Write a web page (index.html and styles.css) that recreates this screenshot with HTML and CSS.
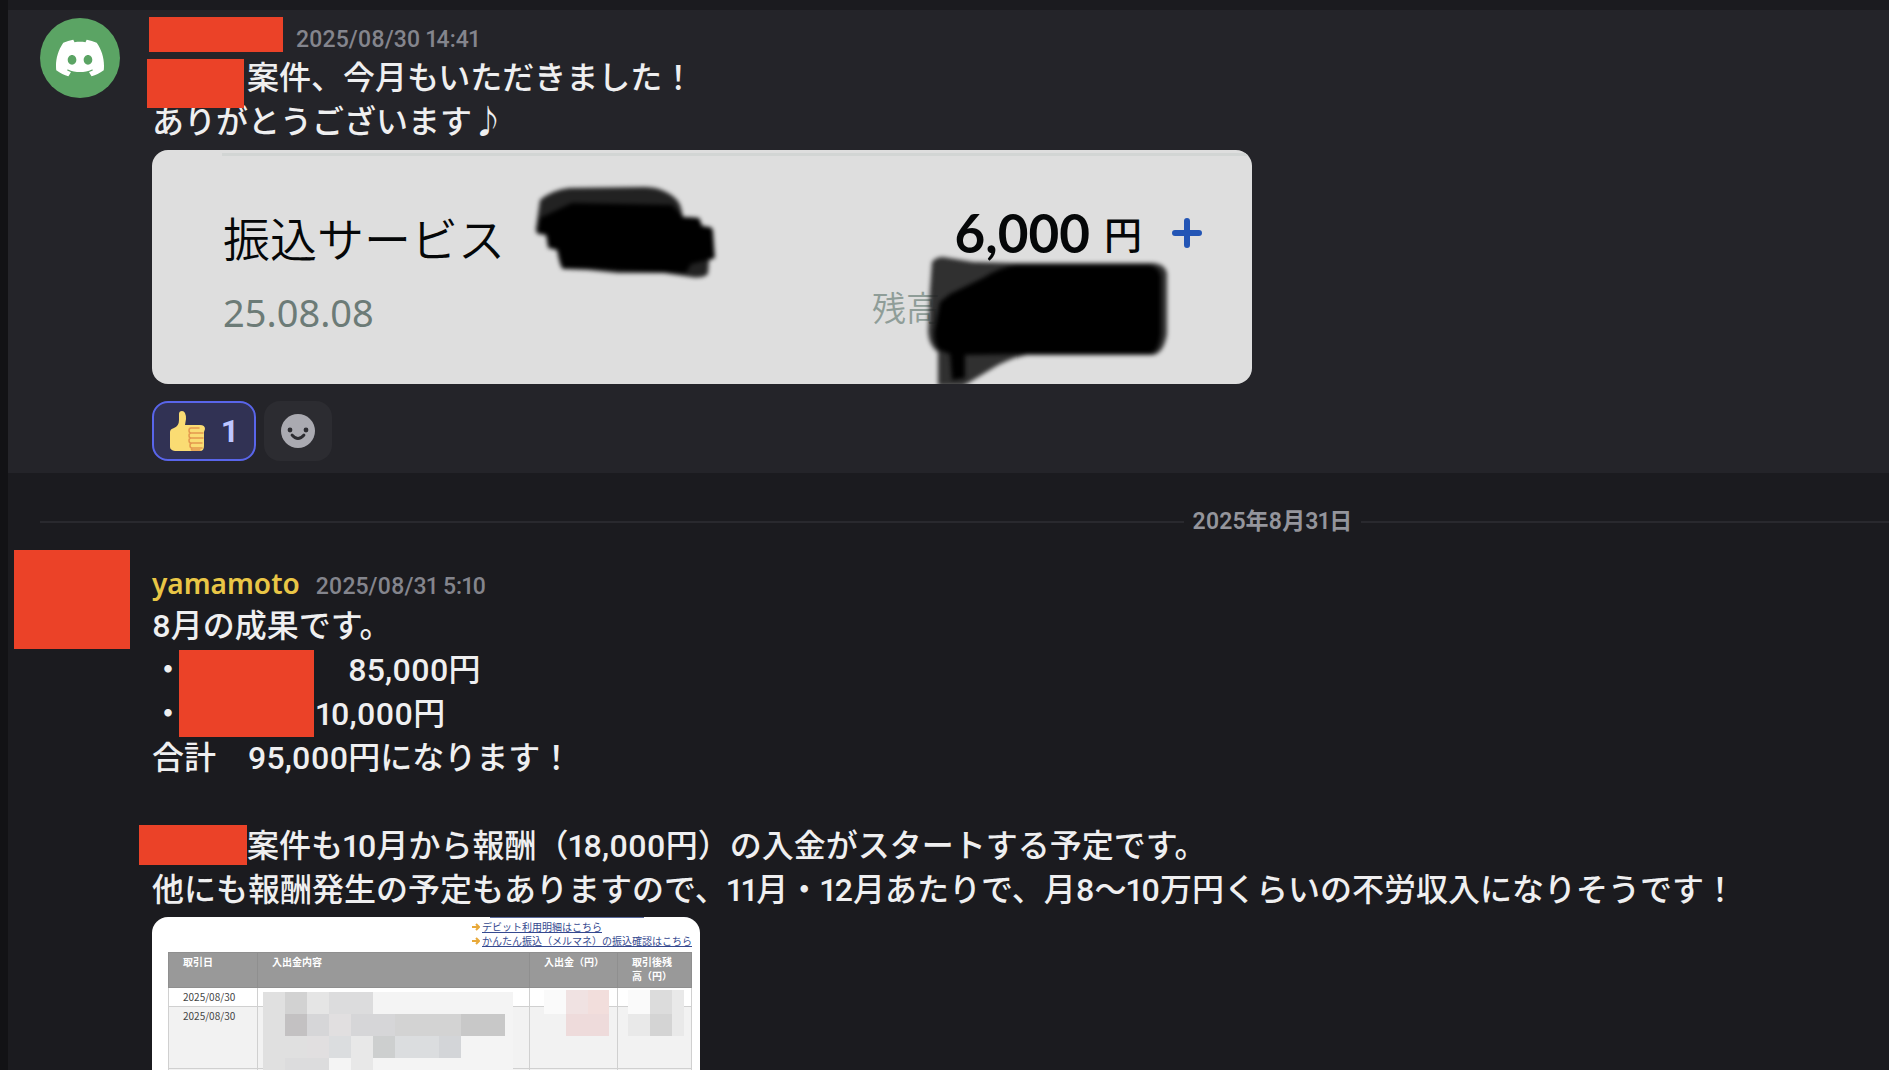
FILE: index.html
```
<!DOCTYPE html>
<html lang="ja">
<head>
  <meta charset="UTF-8">
  <meta name="viewport" content="width=device-width, initial-scale=1.0">
  <title>Discord</title>
  <link rel="stylesheet" href="styles.css">
</head>
<body>
<main class="chat">

  <article class="message highlighted">
    <div class="avatar">
      <svg viewBox="0 0 24 24" width="48" height="48" fill="#fff" aria-hidden="true">
        <path d="M20.317 4.3698a19.7913 19.7913 0 00-4.8851-1.5152.0741.0741 0 00-.0785.0371c-.211.3753-.4447.8648-.6083 1.2495-1.8447-.2762-3.68-.2762-5.4868 0-.1636-.3933-.4058-.8742-.6177-1.2495a.077.077 0 00-.0785-.037 19.7363 19.7363 0 00-4.8852 1.515.0699.0699 0 00-.0321.0277C.5334 9.0458-.319 13.5799.0992 18.0578a.0824.0824 0 00.0312.0561c2.0528 1.5076 4.0413 2.4228 5.9929 3.0294a.0777.0777 0 00.0842-.0276c.4616-.6304.8731-1.2952 1.226-1.9942a.076.076 0 00-.0416-.1057c-.6528-.2476-1.2743-.5495-1.8722-.8923a.077.077 0 01-.0076-.1277c.1258-.0943.2517-.1923.3718-.2914a.0743.0743 0 01.0776-.0105c3.9278 1.7933 8.18 1.7933 12.0614 0a.0739.0739 0 01.0785.0095c.1202.099.246.1981.3728.2924a.077.077 0 01-.0066.1276 12.2986 12.2986 0 01-1.873.8914.0766.0766 0 00-.0407.1067c.3604.698.7719 1.3628 1.225 1.9932a.076.076 0 00.0842.0286c1.961-.6067 3.9495-1.5219 6.0023-3.0294a.077.077 0 00.0313-.0552c.5004-5.177-.8382-9.6739-3.5485-13.6604a.061.061 0 00-.0312-.0286zM8.02 15.3312c-1.1825 0-2.1569-1.0857-2.1569-2.419 0-1.3332.9555-2.4189 2.157-2.4189 1.2108 0 2.1757 1.0952 2.1568 2.419 0 1.3332-.9555 2.4189-2.1569 2.4189zm7.9748 0c-1.1825 0-2.1569-1.0857-2.1569-2.419 0-1.3332.9554-2.4189 2.1569-2.4189 1.2108 0 2.1757 1.0952 2.1568 2.419 0 1.3332-.946 2.4189-2.1568 2.4189Z"/>
      </svg>
    </div>
    <div class="content">
      <header class="meta">
        <span class="name-slot"><span class="redact redact-name"></span></span>
        <time>2025/08/30 14:41</time>
      </header>
      <p><span class="word-slot"><span class="redact redact-word"></span></span>案件、今月もいただきました！</p>
      <p>ありがとうございます♪</p>

      <div class="transfer">
        <div class="transfer-left">
          <div class="service">振込サービス</div>
          <div class="date">25.08.08</div>
        </div>
        <div class="transfer-right">
          <div class="amount">6,000<span class="yen">円</span>
            <svg class="plus" viewBox="0 0 30 30" width="30" height="30" aria-hidden="true"><path d="M15 3v24M3 15h24" stroke="#2355b5" stroke-width="6" stroke-linecap="round"/></svg>
          </div>
          <div class="balance">残高</div>
        </div>
        <svg class="scribble scribble-name" viewBox="0 0 184 96" width="184" height="96" aria-hidden="true">
          <path fill="#222" d="M6 16Q18 6 35 4L111 3Q124 3 134 9 145 15 147 24L149 33 165 34 168 42 176 43 179 46 181 74 175 76 174 90Q168 95 157 93L130 89H84L54 86 29 85Q26 84 23 66L14 64 12 51 4 50Q1 48 2 44Z"/>
          <path fill="#000" d="M6 34L38 19 138 21 149 33 165 34 168 42 178 44 180 74 173 76 157 80 152 89 130 88 84 86 54 84 29 84 24 66 15 63 13 51 4 48Z"/>
        </svg>
        <svg class="scribble scribble-balance" viewBox="0 0 246 132" width="246" height="132" aria-hidden="true">
          <path fill="#222" fill-opacity=".93" d="M6 8Q10 3 17 3L47 8 87 9H227Q239 10 241 19V80Q238 99 227 101H101Q84 104 67 114L37 132H12V98Q3 92 2 78L4 36Z"/>
          <path fill="#000" d="M14 48L24 40 57 24Q74 13 90 11H224Q234 14 235 22V80Q233 98 224 100H98L39 101V124L26 126 24 100 13 96Q8 90 8 78Z"/>
        </svg>
      </div>

      <div class="reactions">
        <button class="reaction reacted" type="button" aria-label="いいね 1">
          <svg viewBox="0 0 36 40" width="36" height="40" aria-hidden="true">
            <path fill="#fadc73" d="M10 3q0-3 3-3 4 0 4 8l-1 6h15q5 0 5 4l-1 3v14q0 5-4 5H6q-5-1-5-4V21q0-3 4-4 5-2 5-8z"/>
            <path fill="none" stroke="#e4984f" stroke-width="1.5" stroke-linecap="round" d="M30 17h-8q-2 0-2 2.500 0 2.500 2 2.500h12M22 22q-2 0-2 2.500t2 2.500h12M22 27q-2 0-2 2.500t2 2.500h11M23 32q-2 0-2 2.500t2 2.500h10M23 37q-1 2 0 2h8"/>
          </svg>
          <span>1</span>
        </button>
        <button class="reaction" type="button" aria-label="リアクションを付ける">
          <svg viewBox="0 0 34 34" width="34" height="34" aria-hidden="true">
            <circle cx="17" cy="17" r="17" fill="#aaaab1"/>
            <circle cx="9" cy="16" r="2.4" fill="#2c2c31"/>
            <circle cx="25" cy="16" r="2.4" fill="#2c2c31"/>
            <path d="M11 21q6 7 12 0" fill="none" stroke="#2c2c31" stroke-width="2.8" stroke-linecap="round"/>
          </svg>
        </button>
      </div>
    </div>
  </article>

  <div class="day-divider"><span>2025年8月31日</span></div>

  <article class="message">
    <div class="avatar-slot"><span class="redact redact-avatar"></span></div>
    <div class="content">
      <header class="meta">
        <a class="username" href="#">yamamoto</a>
        <time>2025/08/31 5:10</time>
      </header>
      <p>8月の成果です。</p>
      <p>・<span class="item-slot"><span class="redact redact-item"></span></span>　85,000円</p>
      <p>・<span class="item-slot"></span>10,000円</p>
      <p>合計　95,000円になります！</p>
      <p class="blank"></p>
      <p><span class="word-slot"><span class="redact redact-project"></span></span>案件も10月から報酬（18,000円）の入金がスタートする予定です。</p>
      <p>他にも報酬発生の予定もありますので、11月・12月あたりで、月8〜10万円くらいの不労収入になりそうです！</p>

      <div class="statement">
        <div class="link-edge"></div>
        <ul class="links">
          <li><svg viewBox="0 0 8 8" width="8" height="8"><path d="M0 4h6M4 1l3 3-3 3" fill="none" stroke="#e8a93a" stroke-width="2"/></svg><a href="#">デビット利用明細はこちら</a></li>
          <li><svg viewBox="0 0 8 8" width="8" height="8"><path d="M0 4h6M4 1l3 3-3 3" fill="none" stroke="#e8a93a" stroke-width="2"/></svg><a href="#">かんたん振込（メルマネ）の振込確認はこちら</a></li>
        </ul>
        <div class="table-wrap">
          <table>
            <colgroup><col class="c-date"><col class="c-detail"><col class="c-amount"><col class="c-balance"></colgroup>
            <thead>
              <tr><th>取引日</th><th>入出金内容</th><th>入出金（円）</th><th>取引後残高（円）</th></tr>
            </thead>
            <tbody>
              <tr><td>2025/08/30</td><td></td><td></td><td></td></tr>
              <tr class="tall"><td>2025/08/30</td><td></td><td></td><td></td></tr>
              <tr class="tall"><td></td><td></td><td></td><td></td></tr>
            </tbody>
          </table>
          <!-- pixelated private columns, 22px tiles -->
          <svg class="mosaic" viewBox="0 0 524 150" width="524" height="150" shape-rendering="crispEdges" aria-hidden="true">
            <path fill="#f4f4f4" d="M95 40h250v88H95z"/>
            <path fill="#e0e0e0" d="M95 40h22v22H95zM95 62h22v22H95zM95 84h44v44H95z"/>
            <path fill="#d2d2d2" d="M117 40h22v22h-22z"/>
            <path fill="#e5e5e5" d="M139 40h22v22h-22z"/>
            <path fill="#dcdcdd" d="M161 40h44v22h-44zM117 106h44v22h-44z"/>
            <path fill="#c3c1c2" d="M117 62h22v22h-22z"/>
            <path fill="#d6d6d8" d="M139 62h22v22h-22zM183 62h44v22h-44z"/>
            <path fill="#e1dfe0" d="M161 62h22v22h-22zM139 84h22v22h-22z"/>
            <path fill="#d3d3d3" d="M227 62h66v22h-66z"/>
            <path fill="#c8c8c8" d="M293 62h44v22h-44z"/>
            <path fill="#dbdddf" d="M161 84h22v22h-22zM227 84h44v22h-44z"/>
            <path fill="#e8e8e8" d="M183 84h22v22h-22zM183 106h22v22h-22z"/>
            <path fill="#cdcfcf" d="M205 84h22v22h-22z"/>
            <path fill="#d3d5d8" d="M271 84h22v22h-22z"/>
            <path fill="#fafafa" d="M376 38h22v24h-22zM460 38h56v24h-56z"/>
            <path fill="#f0e2e2" d="M398 38h22v24h-22z"/>
            <path fill="#f2dedc" d="M420 38h21v24h-21z"/>
            <path fill="#eedbdb" d="M398 62h43v22h-43z"/>
            <path fill="#dcdcdc" d="M482 38h22v24h-22z"/>
            <path fill="#d4d4d4" d="M482 62h22v22h-22z"/>
            <path fill="#e9e9e9" d="M460 62h22v22h-22zM504 38h12v46h-12z"/>
          </svg>
        </div>
      </div>
    </div>
  </article>

</main>
</body>
</html>
```
FILE: styles.css
```
:root {
  --bg: #1b1b1f;
  --bg-highlight: #242429;
  --text: #efeff0;
  --muted: #84858d;
  --redact: #eb4228;
}

* { margin: 0; padding: 0; box-sizing: border-box; }

body {
  background: var(--bg);
  color: var(--text);
  font-family: Roboto, "Noto Sans CJK JP", sans-serif;
  font-variant-numeric: proportional-nums;
}

.chat {
  height: 100vh;
  overflow: hidden;
  padding-top: 10px;
  border-left: 8px solid #121215;
}

.message {
  display: flex;
  gap: 32px;
  padding: 8px 32px 12px;
}
.message.highlighted { background: var(--bg-highlight); }

.avatar {
  flex: none;
  display: flex;
  align-items: center;
  justify-content: center;
  width: 80px;
  height: 80px;
  border-radius: 50%;
  background: #5ba464;
}
.avatar-slot {
  flex: none;
  position: relative;
  width: 80px;
}
.content { flex: 1; min-width: 0; }

.meta {
  display: flex;
  align-items: baseline;
  gap: 16px;
  height: 38px;
  line-height: 34px;
}
.username {
  color: #e9c646;
  font: 600 28px/34px "Noto Sans", sans-serif;
  text-decoration: none;
}
time { color: var(--muted); font-size: 23px; font-weight: 500; }

p {
  font-size: 32px;
  font-weight: 500;
  line-height: 45px;
  height: 44px;
  white-space: nowrap;
}

/* red covers over private text */
.redact { position: absolute; background: var(--redact); }
.name-slot, .word-slot, .item-slot { position: relative; display: inline-block; height: 32px; }
.word-slot, .item-slot { vertical-align: middle; }
.name-slot { width: 128px; height: 29px; }
.word-slot { width: 95px; }
.item-slot { width: 132px; }
.redact-name { left: -3px; top: -1px; width: 134px; height: 35px; }
.redact-word { left: -5px; top: -6px; width: 97px; height: 49px; }
.redact-project { left: -13px; top: -8px; width: 108px; height: 40px; }
.redact-item { left: -5px; top: -7px; width: 135px; height: 87px; }
.redact-avatar { left: -26px; top: -16px; width: 116px; height: 99px; }

/* bank transfer picture */
.transfer {
  position: relative;
  display: flex;
  justify-content: space-between;
  max-width: 1100px;
  height: 234px;
  margin-top: 6px;
  padding: 52px 50px 0 71px;
  border-radius: 16px;
  overflow: hidden;
  background: #dedede;
  color: #050708;
}
.transfer::before {
  content: "";
  position: absolute;
  top: 3px;
  left: 70px;
  right: 0;
  height: 3px;
  background: #d2d5d4;
}
.service { font: 350 47px/70px "Noto Sans CJK JP", sans-serif; }
.date { font: 400 38px/80px "Noto Sans", sans-serif; color: #6c7b77; }
.transfer-right { width: 330px; }
.amount {
  display: flex;
  align-items: center;
  justify-content: flex-end;
  font: 700 53px/62px Lato, sans-serif;
}
.yen { margin: 0 30px 0 14px; font: 500 38px/62px "Noto Sans CJK JP", sans-serif; }
.balance { font: 350 34px/86px "Noto Sans CJK JP", sans-serif; color: #8f9d98; }
.scribble { position: absolute; filter: blur(2px); }
.scribble-name { left: 382px; top: 34px; }
.scribble-balance { left: 774px; top: 104px; }

.reactions { display: flex; gap: 8px; margin-top: 17px; }
.reaction {
  display: flex;
  align-items: center;
  justify-content: center;
  gap: 16px;
  width: 68px;
  height: 60px;
  border: none;
  border-radius: 16px;
  background: #2c2c31;
  cursor: pointer;
}
.reaction.reacted {
  width: 104px;
  border: 2px solid #5965ea;
  background: #313254;
  color: #bdc6ff;
  font: 700 32px Roboto, sans-serif;
}

.day-divider {
  display: flex;
  align-items: center;
  gap: 9px;
  margin: 37px 0 24px 32px;
  color: #94959c;
  font-size: 23px;
  font-weight: 600;
  line-height: 24px;
}
.day-divider::before, .day-divider::after {
  content: "";
  flex: 13;
  height: 2px;
  background: #29292e;
}
.day-divider::after { flex: 6; }

/* account statement picture */
.statement {
  max-width: 548px;
  margin-top: 5px;
  padding: 0 8px 0 16px;
  border-radius: 16px;
  overflow: hidden;
  background: #fff;
  color: #444;
  font: 10px/14px "Noto Sans CJK JP", sans-serif;
}
.link-edge { width: 154px; height: 1px; margin-left: 322px; background: #5a6a9c; }
.links {
  width: 220px;
  margin: 2px 0 4px auto;
  list-style: none;
  white-space: nowrap;
}
.links li { display: flex; align-items: center; gap: 2px; height: 14px; }
.links a { color: #35498f; }
.table-wrap { position: relative; }
table { width: 100%; border-collapse: collapse; table-layout: fixed; }
.c-date { width: 89px; }
.c-detail { width: 272px; }
.c-amount { width: 88px; }
th, td {
  padding: 2px 14px;
  border: 1px solid #d0d0d0;
  text-align: left;
  vertical-align: top;
}
th { height: 35px; border-color: #8f8f8f; background: #999; color: #fff; white-space: nowrap; }
th:last-child { white-space: normal; }
td { height: 19px; }
.tall td { height: 62px; background: #f2f2f2; }
.mosaic { position: absolute; left: 0; top: 0; }
```
